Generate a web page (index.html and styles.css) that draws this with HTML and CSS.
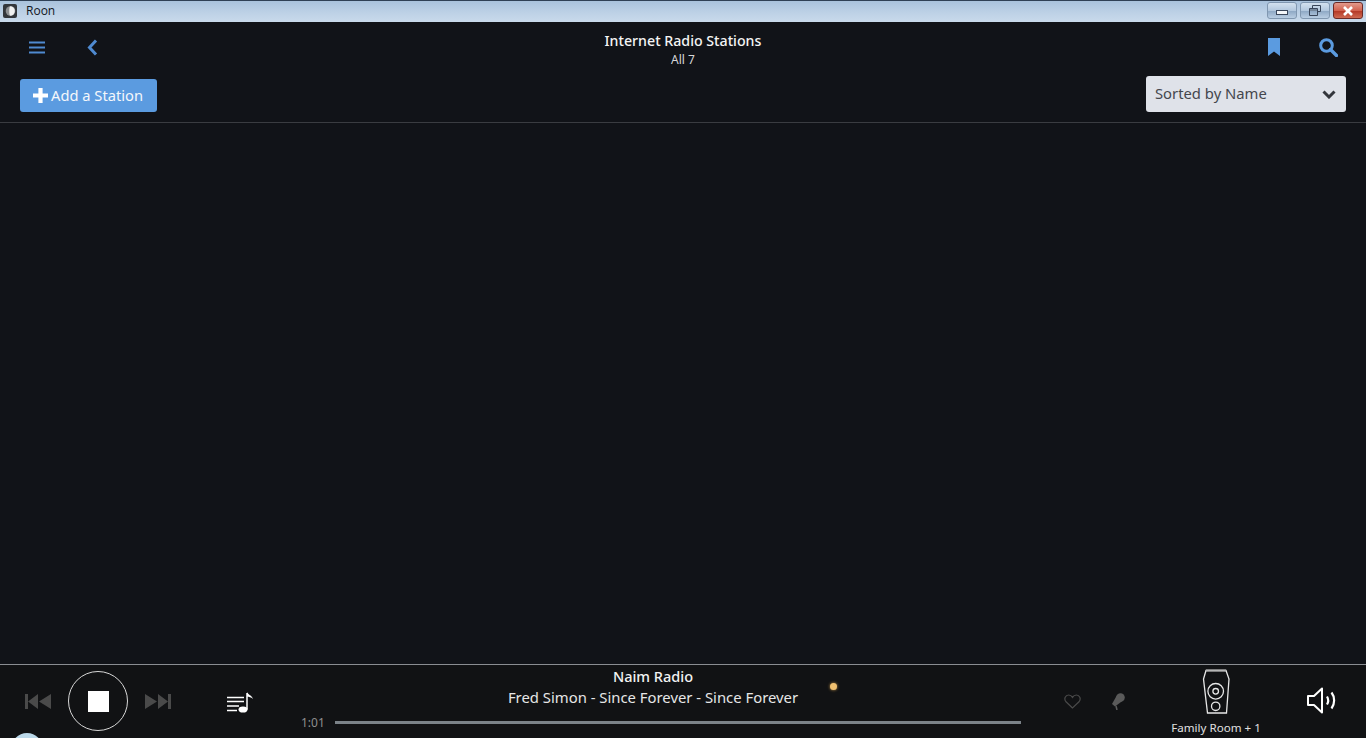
FILE: index.html
```html
<!DOCTYPE html>
<html lang="en">
<head>
  <meta charset="UTF-8">
  <title>Roon</title>
  <link rel="stylesheet" href="styles.css">
</head>
<body>
  <div class="titlebar">
    <svg class="app-icon" width="14" height="14" viewBox="0 0 14 14"><rect width="14" height="14" rx="2" fill="#33363b"/><circle cx="7.500" cy="7" r="4.800" fill="#8d8f92"/><path d="M7 2.200a4.800 4.800 0 0 1 0 9.600c-1-1.500-1-8 0-9.600z" fill="#f1f1f1"/></svg>
    <span class="app-name">Roon</span>
    <div class="win-buttons">
      <div class="win-btn win-min"><span class="min-glyph"></span></div>
      <div class="win-btn win-max">
        <svg width="12" height="11" viewBox="0 0 12 11"><path d="M3.500 3V.5h8v6H8.500M.5 3.500h8v7h-8z" fill="none" stroke="#39465a"/><path d="M1 5h7" stroke="#39465a"/></svg>
      </div>
      <div class="win-btn win-close">
        <svg width="14" height="10" viewBox="0 0 14 10"><path d="M3 1l8 8M11 1l-8 8" stroke="#fff" stroke-width="2.600"/></svg>
      </div>
    </div>
  </div>

  <header class="topbar">
    <div class="nav-left">
      <svg class="icon-menu" width="16" height="13" viewBox="0 0 16 13"><path d="M0 1.500h16M0 6.500h16M0 11.500h16" stroke="#4f8ad0" stroke-width="2.200"/></svg>
      <svg class="icon-back" width="11" height="17" viewBox="0 0 11 17"><path d="M9 1.500L2.500 8.500 9 15.500" fill="none" stroke="#4f8ad0" stroke-width="3"/></svg>
    </div>
    <div class="page-title">
      <div class="title">Internet Radio Stations</div>
      <div class="subtitle">All 7</div>
    </div>
    <div class="nav-right">
      <svg width="12" height="18" viewBox="0 0 12 18"><path d="M0 0h12v18l-6-4.500L0 18z" fill="#5b9be0"/></svg>
      <svg width="19" height="19" viewBox="0 0 19 19"><circle cx="7.500" cy="7.500" r="5.800" fill="none" stroke="#5b9be0" stroke-width="3"/><path d="M11.500 11.500l6 6" stroke="#5b9be0" stroke-width="3.400" stroke-linecap="round"/></svg>
    </div>
  </header>

  <div class="toolbar">
    <button class="add-btn">
      <svg width="15" height="15" viewBox="0 0 15 15"><path d="M7.500 0v15M0 7.500h15" stroke="#fff" stroke-width="4.200"/></svg>
      <span class="add-label">Add a Station</span>
    </button>
    <div class="sort-select">
      <span class="sort-label">Sorted by Name</span>
      <svg width="14" height="9" viewBox="0 0 14 9"><path d="M1.500 1.500L7 7l5.500-5.500" fill="none" stroke="#33363c" stroke-width="3"/></svg>
    </div>
  </div>

  <main class="content"></main>

  <footer class="player">
    <div class="transport">
      <svg class="skip" width="26" height="15" viewBox="0 0 26 15"><path d="M0 0h3v15H0zM13 0v15L3 7.500zM26 0v15L14 7.500z" fill="#4a4a4a"/></svg>
      <div class="stop-btn"><div class="stop-square"></div></div>
      <svg class="skip" width="26" height="15" viewBox="0 0 26 15"><path d="M26 0h-3v15h3zM13 0v15l10-7.500zM0 0v15l12-7.500z" fill="#4a4a4a"/></svg>
      <svg class="queue" width="27" height="21" viewBox="0 0 27 21"><path d="M0 5.500h17M0 9.500h17M0 14h12M0 18.500h10" stroke="#fff" stroke-width="1.300"/><ellipse cx="16" cy="17.500" rx="4.500" ry="3.100" fill="#fff"/><path d="M20 17.500V1" stroke="#fff" stroke-width="1.500"/><path d="M20 0c1 3 5 3 6 7-2-2-4-2-6-2.500z" fill="#fff"/></svg>
    </div>
    <div class="now-playing">
      <div class="track-title">Naim Radio</div>
      <div class="track-line">Fred Simon - Since Forever - Since Forever</div>
      <div class="progress-row">
        <span class="time">1:01</span>
        <div class="progress"></div>
      </div>
      <div class="signal-dot"></div>
    </div>
    <div class="track-actions">
      <svg width="17" height="15" viewBox="0 0 17 15"><path d="M8.500 14L2 7.800C-.5 5 1.500 1 4.600 1c1.800 0 3.100 1 3.900 2.400C9.300 2 10.600 1 12.400 1c3.100 0 5.100 4 2.600 6.800z" fill="none" stroke="#4a4a4a" stroke-width="1.200"/></svg>
      <svg width="14" height="17" viewBox="0 0 14 17"><circle cx="9.500" cy="4.500" r="4.300" fill="#5a5a5a"/><path d="M6.200 1.800L12 7.500l-8 6L1 11z" fill="#5a5a5a"/><path d="M5 13l1 4" stroke="#5a5a5a" stroke-width="1.600"/></svg>
    </div>
    <div class="zone">
      <svg width="28" height="45" viewBox="0 0 28 45" fill="none" stroke="#e6e6e6" stroke-width="1.300"><path d="M4 1.500h20l3 8.500-2.500 34h-19L1.500 10z"/><path d="M4 1.500h20" stroke="#b5b5b5" stroke-width="2"/><circle cx="13.700" cy="22.300" r="7.800"/><circle cx="13.700" cy="22.300" r="2.800"/><circle cx="13.700" cy="37.300" r="4.200"/></svg>
      <div class="zone-name">Family Room + 1</div>
    </div>
    <svg class="volume" width="29" height="27" viewBox="0 0 29 27" fill="none" stroke="#fff"><path d="M1 9h6l8-7.500v24L7 18H1z" stroke-width="2" stroke-linejoin="round"/><path d="M20 9.500c1.500 2.500 1.500 5.500 0 8" stroke-width="2.200"/><path d="M24.500 5.500c3.500 4.500 3.500 11.500 0 16" stroke-width="2.200"/></svg>
    <div class="profile-circle"></div>
  </footer>
</body>
</html>
```

FILE: styles.css
```css
html, body {
  height: 100%;
  margin: 0;
  overflow: hidden;
}
body {
  display: flex;
  flex-direction: column;
  background-color: #111318;
  font-family: "Noto Sans", "Open Sans", sans-serif;
  color: #f2f2f2;
}

/* window frame */
.titlebar {
  display: flex;
  align-items: center;
  flex: 0 0 22px;
  height: 22px;
  box-sizing: border-box;
  border-top: 1px solid #2f4055;
  background: linear-gradient(180deg, #a9c2dc 0%, #bdd1e6 55%, #c9daeb 100%);
  color: #10151c;
}
.app-icon {
  margin-left: 3px;
  margin-top: -2px;
}
.app-name {
  margin-left: 9px;
  margin-top: -2px;
  font-family: "Open Sans", sans-serif;
  font-size: 12px;
}
.win-buttons {
  display: flex;
  gap: 3px;
  align-self: flex-start;
  margin-left: auto;
  margin-right: 3px;
}
.win-btn {
  display: flex;
  align-items: center;
  justify-content: center;
  width: 30px;
  height: 17px;
  box-sizing: border-box;
  border: 1px solid #8097b0;
  margin-top: 1px;
  border-radius: 3px;
  background: linear-gradient(180deg, #d3e1ef 0, #b3c8de 50%, #8fa9c5 55%, #b9cee3 100%);
}
.win-close {
  border-color: #6c2a26;
  background: linear-gradient(180deg, #e39a8c 0, #d2624f 50%, #b53a28 55%, #cf6a52 100%);
}
.min-glyph {
  display: block;
  width: 10px;
  height: 3px;
  margin-top: 3px;
  background: #f3f6f9;
  border: 1px solid #39465a;
}

/* top navigation */
.topbar {
  display: grid;
  grid-template-columns: 1fr auto 1fr;
  align-items: center;
  flex: 0 0 50px;
  height: 50px;
}
.nav-left {
  display: flex;
  align-items: center;
  gap: 42px;
  padding-left: 29px;
  padding-top: 1px;
}
.nav-right {
  display: flex;
  align-items: center;
  justify-content: flex-end;
  gap: 39px;
  padding-right: 28px;
}
.page-title {
  padding-top: 5px;
  text-align: center;
}
.title {
  font-size: 14.200px;
  font-weight: 500;
  line-height: 19px;
  color: #f4f4f4;
}
.subtitle {
  margin-top: 1px;
  font-size: 12px;
  line-height: 17px;
  color: #d8d8d8;
}

.toolbar {
  display: flex;
  align-items: flex-end;
  justify-content: space-between;
  flex: 0 0 51px;
  height: 51px;
  box-sizing: border-box;
  padding: 4px 20px 10px;
  border-bottom: 1px solid #3a3c41;
}
.add-btn {
  display: flex;
  align-items: center;
  gap: 3px;
  width: 137px;
  height: 33px;
  padding: 0 0 0 13px;
  border: 0;
  border-radius: 3px;
  background-color: #5b9be0;
  color: #f4f7fb;
  font-family: inherit;
  font-size: 14.700px;
}
.add-label {
  margin-top: -2px;
}
.sort-select {
  display: flex;
  align-items: center;
  justify-content: space-between;
  width: 200px;
  height: 36px;
  box-sizing: border-box;
  padding: 0 10px 0 9px;
  border-radius: 3px;
  background-color: #dfe2e9;
  color: #44474d;
  font-size: 14.800px;
}
.sort-label {
  margin-top: -2px;
}

.content {
  flex: 1;
}

/* player bar */
.player {
  position: relative;
  display: flex;
  flex: 0 0 74px;
  height: 74px;
  box-sizing: border-box;
  border-top: 1px solid #8a8d92;
  background-color: #111214;
}
.transport {
  display: flex;
  align-items: center;
  width: 290px;
  padding-left: 25px;
  box-sizing: border-box;
}
.stop-btn {
  display: flex;
  align-items: center;
  justify-content: center;
  width: 60px;
  height: 60px;
  box-sizing: border-box;
  margin: -1px 17px 0 17px;
  border: 1px solid #d8d8d8;
  border-radius: 50%;
}
.stop-square {
  width: 21px;
  height: 21px;
  background-color: #fff;
}
.queue {
  margin-left: 56px;
  margin-top: 2px;
}
.now-playing {
  position: relative;
  width: 720px;
  margin-left: 11px;
  text-align: center;
}
.track-title {
  margin-top: 1px;
  padding-right: 16px;
  font-size: 14.500px;
  font-weight: 500;
  line-height: 20px;
  color: #f2f2f2;
}
.track-line {
  padding-right: 16px;
  font-size: 14.850px;
  line-height: 22px;
  color: #e6e6e6;
}
.progress-row {
  display: flex;
  align-items: center;
  gap: 10px;
  margin-top: 6px;
}
.time {
  font-size: 12px;
  color: #8e8e8e;
}
.progress {
  width: 686px;
  height: 3px;
  background-color: #7b8288;
}
.signal-dot {
  position: absolute;
  top: 18px;
  left: 529px;
  width: 7px;
  height: 7px;
  border-radius: 50%;
  background-color: #f0c070;
  box-shadow: 0 0 3px #c69549;
}
.track-actions {
  display: flex;
  align-items: center;
  gap: 30px;
  margin-left: 43px;
  margin-top: -1px;
}
.zone {
  display: flex;
  flex-direction: column;
  align-items: center;
  width: 110px;
  margin-left: 36px;
  padding-top: 4px;
}
.zone-name {
  margin-top: 6px;
  font-size: 11.600px;
  line-height: 16px;
  white-space: nowrap;
  color: #e0e0e0;
}
.volume {
  margin: 22px 0 0 36px;
}
.profile-circle {
  position: absolute;
  left: 11px;
  top: 68px;
  width: 32px;
  height: 32px;
  border-radius: 50%;
  background-color: #bcd9ea;
}
```
